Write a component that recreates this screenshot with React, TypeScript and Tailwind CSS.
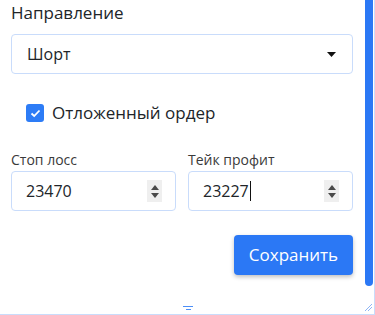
import React, { useState } from "react";

const font = { fontFamily: '"Open Sans", "Liberation Sans", sans-serif' };

const Spinner: React.FC = () => (
	<div className="flex h-[22px] w-[15px] flex-col items-center justify-center gap-[3px] bg-[#efefef]">
		<svg width="8" height="5" viewBox="0 0 8 5">
			<path d="M4 0 L8 5 L0 5 Z" fill="#4a4a4a" />
		</svg>
		<svg width="8" height="5" viewBox="0 0 8 5">
			<path d="M0 0 L8 0 L4 5 Z" fill="#4a4a4a" />
		</svg>
	</div>
);

type NumberFieldProps = {
	label: string;
	value: string;
	caret?: boolean;
};

const NumberField: React.FC<NumberFieldProps> = ({ label, value, caret }) => (
	<div className="flex flex-1 flex-col">
		<span className="mb-[1px] text-[14px] leading-[20px] text-[#3a3a3a]">{label}</span>
		<div className="flex h-[40px] items-center justify-between rounded-[4px] border border-[#c9dcfb] pl-[14px] pr-[13px]">
			<span className="flex items-center text-[16px] text-[#212529]">
				{value}
				{caret && <span className="ml-[1px] inline-block h-[20px] w-[1px] bg-[#111]" />}
			</span>
			<Spinner />
		</div>
	</div>
);

const App: React.FC = () => {
	const [pending] = useState(true);

	return (
		<div className="relative flex h-[315px] w-[375px] overflow-hidden border-b border-[#c9dcfb] bg-white" style={font}>
			<div className="flex flex-1 flex-col pl-[11px] pr-[12px]">
				<span className="mt-[1px] text-[17px] leading-[24px] text-[#212529]">Направление</span>
				<div className="mt-[9px] flex h-[40px] items-center justify-between rounded-[4px] border border-[#c9dcfb] pl-[15px] pr-[16px]">
					<span className="text-[16px] text-[#212529]">Шорт</span>
					<svg width="9" height="5" viewBox="0 0 9 5">
						<path d="M0 0 L9 0 L4.5 5 Z" fill="#111" />
					</svg>
				</div>
				<label className="mt-[27px] flex items-center gap-[8px] pl-[15px]">
					<span className="flex h-[18px] w-[18px] items-center justify-center rounded-[3px] bg-[#2d7cf6]">
						{pending && (
							<svg width="11" height="9" viewBox="0 0 11 9">
								<path d="M1.5 4.5 L4.2 7 L9.5 1.5" stroke="#fff" strokeWidth="1.8" fill="none" />
							</svg>
						)}
					</span>
					<span className="text-[17px] leading-[24px] text-[#212529]">Отложенный ордер</span>
				</label>
				<div className="mt-[25px] flex gap-[12px]">
					<NumberField label="Стоп лосс" value="23470" />
					<NumberField label="Тейк профит" value="23227" caret />
				</div>
				<div className="mt-[24px] flex justify-end">
					<button
						type="button"
						className="h-[40px] w-[119px] rounded-[4px] bg-[#2b78f5] text-[17px] text-white shadow-[0_2px_4px_rgba(0,0,0,0.25)]"
					>
						Сохранить
					</button>
				</div>
			</div>
			<div className="flex w-[10px] flex-col border-r border-[#c9dcfb]">
				<div className="h-[286px] w-[8px] rounded-b-[4px] bg-[#2b78f5]" />
			</div>
			<div className="absolute bottom-[4px] left-[183px] flex flex-col items-center gap-[2px]">
				<span className="h-[1px] w-[10px] bg-[#4d8ff7]" />
				<span className="h-[1px] w-[5px] bg-[#4d8ff7]" />
			</div>
			<svg className="absolute bottom-[3px] right-[3px]" width="8" height="8" viewBox="0 0 8 8">
				<path d="M1 8 L8 1 M4 8 L8 4" stroke="#8fb5f5" strokeWidth="1" />
			</svg>
		</div>
	);
};

export default App;
